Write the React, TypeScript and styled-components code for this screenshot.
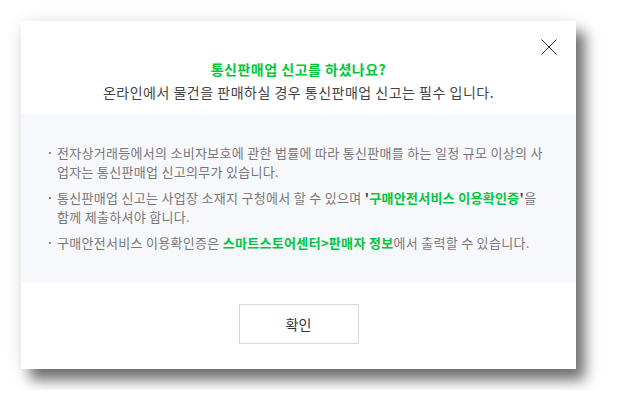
import React from "react";
import styled, { createGlobalStyle } from "styled-components";

const GlobalStyle = createGlobalStyle`
  html, body {
    margin: 0;
    padding: 0;
    background: #ffffff;
  }
  body {
    font-family: "Noto Sans CJK KR", "Noto Sans", sans-serif;
  }
`;

export default function App() {
    return (
        <Page>
            <GlobalStyle />
            <Modal>
                <CloseButton aria-label="닫기">
                    <svg width="16" height="16" viewBox="0 0 16 16">
                        <path d="M0.5 0.5 L15.5 15.5 M15.5 0.5 L0.5 15.5" stroke="#333" strokeWidth="1" fill="none" />
                    </svg>
                </CloseButton>

                {/* 제목 영역 */}
                <Header>
                    <Title>통신판매업 신고를 하셨나요?</Title>
                    <SubTitle>온라인에서 물건을 판매하실 경우 통신판매업 신고는 필수 입니다.</SubTitle>
                </Header>

                {/* 안내 목록 */}
                <Notice>
                    <NoticeList>
                        <NoticeItem>
                            전자상거래등에서의 소비자보호에 관한 법률에 따라 통신판매를 하는 일정 규모 이상의 사업자는 통신판매업 신고의무가 있습니다.
                        </NoticeItem>
                        <NoticeItem>
                            통신판매업 신고는 사업장 소재지 구청에서 할 수 있으며{" "}
                            <Strong>
                                '<Green>구매안전서비스 이용확인증</Green>'
                            </Strong>
                            을 함께 제출하셔야 합니다.
                        </NoticeItem>
                        <NoticeItem>
                            구매안전서비스 이용확인증은 <Green>스마트스토어센터&gt;판매자 정보</Green>에서 출력할 수 있습니다.
                        </NoticeItem>
                    </NoticeList>
                </Notice>

                <Footer>
                    <ConfirmButton>확인</ConfirmButton>
                </Footer>
            </Modal>
        </Page>
    );
}

const Page = styled.div`
    padding: 21px;
`;

const Modal = styled.div`
    position: relative;
    width: 555px;
    background: #ffffff;
    box-shadow: 0 0 18px rgba(0, 0, 0, 0.08), 9px 11px 13px rgba(0, 0, 0, 0.55);
`;

const CloseButton = styled.button`
    position: absolute;
    top: 18px;
    right: 19px;
    width: 16px;
    height: 16px;
    padding: 0;
    border: 0;
    background: none;
    display: flex;
    cursor: pointer;
`;

const Header = styled.div`
    padding: 37px 20px 10px;
    text-align: center;
    letter-spacing: 0.5px;
`;

const Title = styled.h2`
    margin: 0;
    font-size: 14px;
    line-height: 23px;
    font-weight: 700;
    color: #00c73c;
`;

const SubTitle = styled.p`
    margin: 0;
    font-size: 14px;
    line-height: 23px;
    color: #444;
`;

const Notice = styled.div`
    background: #f7f8fc;
    padding: 29px 28px 31px;
`;

const NoticeList = styled.ul`
    margin: 0;
    padding: 0;
    list-style: none;
`;

const NoticeItem = styled.li`
    position: relative;
    padding-left: 8px;
    font-size: 13px;
    letter-spacing: 0.3px;
    line-height: 19px;
    color: #777;

    & + & {
        margin-top: 7px;
    }

    &::before {
        content: "";
        position: absolute;
        left: 0;
        top: 9px;
        width: 2px;
        height: 2px;
        background: #888;
    }
`;

const Strong = styled.strong`
    font-weight: 700;
    color: #444;
`;

const Green = styled.strong`
    font-weight: 700;
    color: #00c73c;
`;

const Footer = styled.div`
    display: flex;
    justify-content: center;
    padding: 21px 0 25px;
`;

const ConfirmButton = styled.button`
    width: 120px;
    height: 40px;
    border: 1px solid #d8d8de;
    background: #fff;
    font-family: "Noto Sans CJK KR", sans-serif;
    font-size: 14px;
    color: #333;
    cursor: pointer;
`;
